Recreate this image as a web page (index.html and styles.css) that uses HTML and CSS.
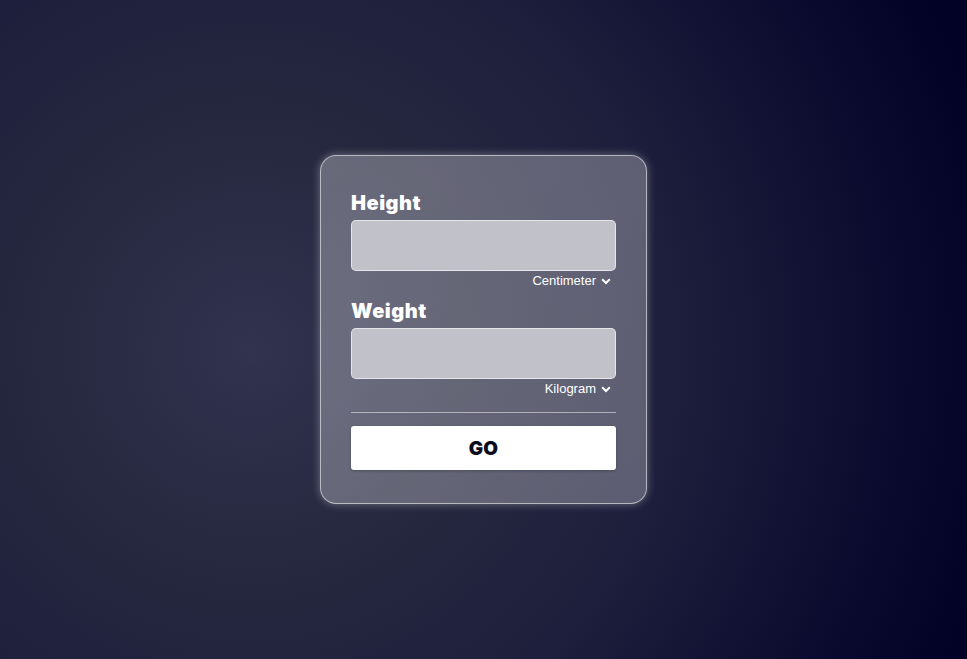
FILE: index.html
```html
<!DOCTYPE html>
<html lang="en">
<head>
<meta charset="utf-8">
<title>BMI</title>
<link rel="stylesheet" href="styles.css">
</head>
<body>
<main class="page">
  <form class="card">
    <div class="field">
      <label class="label" for="h">Height</label>
      <input class="input" id="h" type="text">
      <div class="unit">Centimeter <svg class="chev" viewBox="0 0 10 7" width="10" height="7"><path d="M1.2 1.3 L5 5 L8.8 1.3" fill="none" stroke="#fff" stroke-width="2"/></svg></div>
    </div>
    <div class="field">
      <label class="label" for="w">Weight</label>
      <input class="input" id="w" type="text">
      <div class="unit">Kilogram <svg class="chev" viewBox="0 0 10 7" width="10" height="7"><path d="M1.2 1.3 L5 5 L8.8 1.3" fill="none" stroke="#fff" stroke-width="2"/></svg></div>
    </div>
    <hr class="divider">
    <button class="go" type="button">GO</button>
  </form>
</main>
</body>
</html>
```

FILE: styles.css
```css
html, body {
  margin: 0;
  padding: 0;
  height: 100%;
}
body {
  background: radial-gradient(circle at 26% 53%, #31334f 0px, #26283f 220px, #1e1f3c 420px, #0b0b2f 640px, #020226 760px);
  font-family: "Liberation Sans", Arial, sans-serif;
}
.page {
  min-height: 100vh;
  display: flex;
  align-items: center;
  justify-content: center;
}
.card {
  width: 265px;
  padding: 32px 30px 33px;
  border: 1px solid rgba(255, 255, 255, 0.55);
  border-radius: 16px;
  background: linear-gradient(135deg, rgba(255,255,255,0.3), rgba(255,255,255,0.28));
  box-shadow: 0 0 8px rgba(255, 255, 255, 0.35);
  display: flex;
  flex-direction: column;
}
.field {
  display: flex;
  flex-direction: column;
}
.field + .field {
  margin-top: 7px;
}
.label {
  font-family: "Inter", sans-serif;
  font-weight: 900;
  font-size: 20px;
  line-height: 30px;
  color: #fff;
  letter-spacing: 0.5px;
}
.input {
  box-sizing: border-box;
  margin: 2px 0 0;
  height: 51px;
  width: 100%;
  border: 1px solid rgba(255, 255, 255, 0.6);
  border-radius: 5px;
  background: #c1c1c9;
  outline: none;
}
.unit {
  margin-top: 1px;
  height: 17px;
  display: flex;
  align-items: center;
  justify-content: flex-end;
  gap: 5px;
  padding-right: 5px;
  font-size: 13px;
  color: #fff;
}
.chev {
  display: block;
  margin-top: 1px;
}
.divider {
  margin: 15px 0 0;
  border: 0;
  height: 1px;
  background: rgba(255, 255, 255, 0.5);
}
.go {
  margin-top: 13px;
  height: 44px;
  border: 0;
  border-radius: 3px;
  background: #fff;
  box-shadow: 0 1px 3px rgba(0, 0, 0, 0.25);
  font-family: "Inter", sans-serif;
  font-weight: 900;
  font-size: 19px;
  letter-spacing: 0.3px;
  color: #0b0b1e;
  cursor: pointer;
}
```
